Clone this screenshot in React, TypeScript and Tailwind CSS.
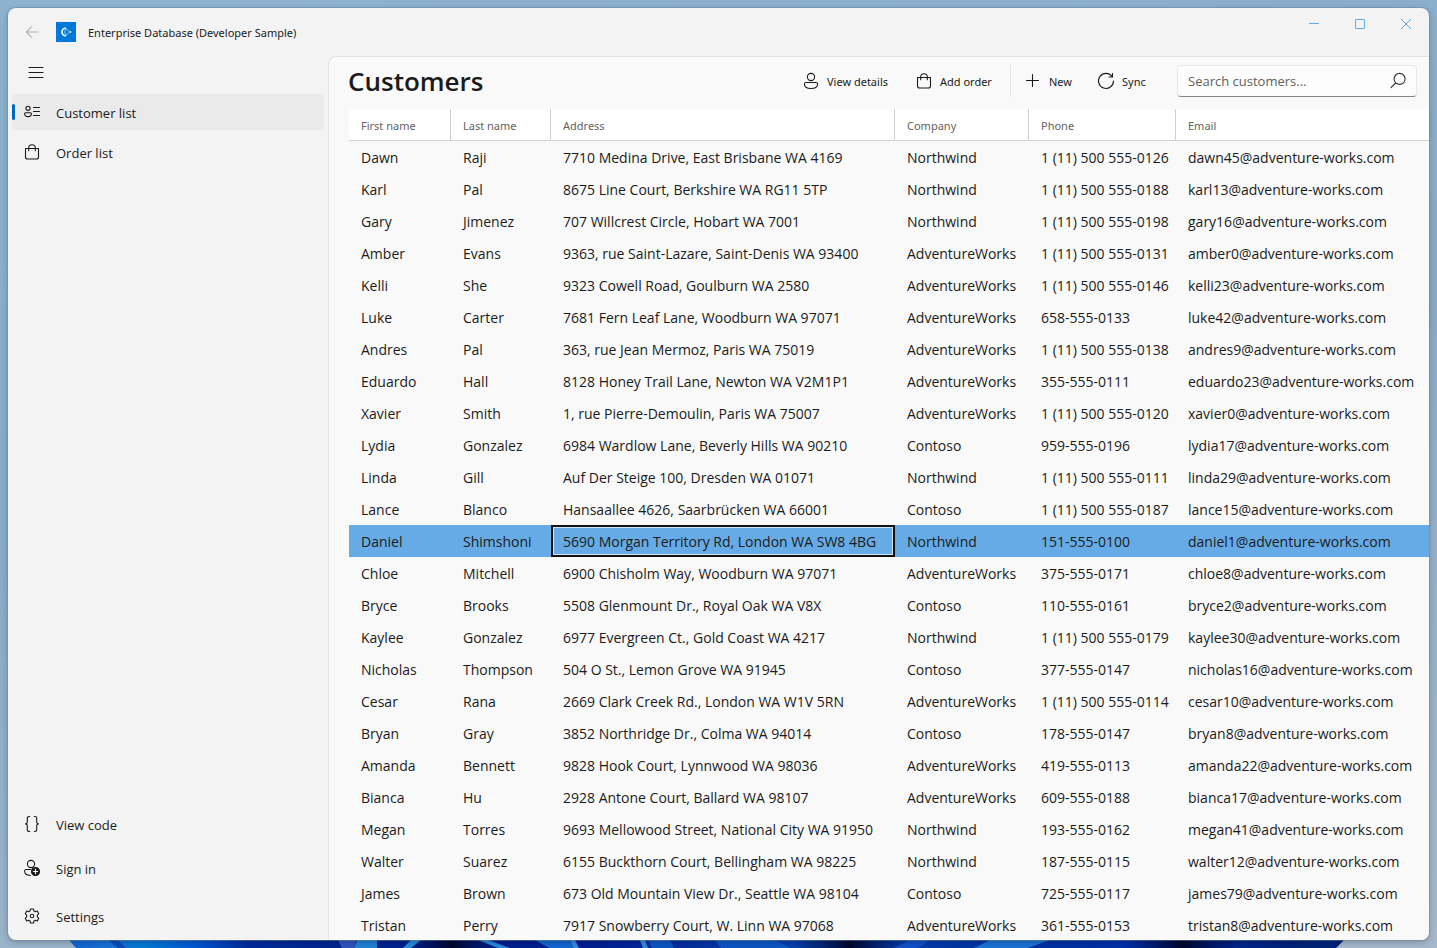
import { useState } from "react";
import type { ReactNode } from "react";

type Customer = [string, string, string, string, string, string];

const N = "Northwind";
const A = "AdventureWorks";
const C = "Contoso";

const customers: Customer[] = [
  ["Dawn", "Raji", "7710 Medina Drive, East Brisbane WA 4169", N, "1 (11) 500 555-0126", "dawn45@adventure-works.com"],
  ["Karl", "Pal", "8675 Line Court, Berkshire WA RG11 5TP", N, "1 (11) 500 555-0188", "karl13@adventure-works.com"],
  ["Gary", "Jimenez", "707 Willcrest Circle, Hobart WA 7001", N, "1 (11) 500 555-0198", "gary16@adventure-works.com"],
  ["Amber", "Evans", "9363, rue Saint-Lazare, Saint-Denis WA 93400", A, "1 (11) 500 555-0131", "amber0@adventure-works.com"],
  ["Kelli", "She", "9323 Cowell Road, Goulburn WA 2580", A, "1 (11) 500 555-0146", "kelli23@adventure-works.com"],
  ["Luke", "Carter", "7681 Fern Leaf Lane, Woodburn WA 97071", A, "658-555-0133", "luke42@adventure-works.com"],
  ["Andres", "Pal", "363, rue Jean Mermoz, Paris WA 75019", A, "1 (11) 500 555-0138", "andres9@adventure-works.com"],
  ["Eduardo", "Hall", "8128 Honey Trail Lane, Newton WA V2M1P1", A, "355-555-0111", "eduardo23@adventure-works.com"],
  ["Xavier", "Smith", "1, rue Pierre-Demoulin, Paris WA 75007", A, "1 (11) 500 555-0120", "xavier0@adventure-works.com"],
  ["Lydia", "Gonzalez", "6984 Wardlow Lane, Beverly Hills WA 90210", C, "959-555-0196", "lydia17@adventure-works.com"],
  ["Linda", "Gill", "Auf Der Steige 100, Dresden WA 01071", N, "1 (11) 500 555-0111", "linda29@adventure-works.com"],
  ["Lance", "Blanco", "Hansaallee 4626, Saarbrücken WA 66001", C, "1 (11) 500 555-0187", "lance15@adventure-works.com"],
  ["Daniel", "Shimshoni", "5690 Morgan Territory Rd, London WA SW8 4BG", N, "151-555-0100", "daniel1@adventure-works.com"],
  ["Chloe", "Mitchell", "6900 Chisholm Way, Woodburn WA 97071", A, "375-555-0171", "chloe8@adventure-works.com"],
  ["Bryce", "Brooks", "5508 Glenmount Dr., Royal Oak WA V8X", C, "110-555-0161", "bryce2@adventure-works.com"],
  ["Kaylee", "Gonzalez", "6977 Evergreen Ct., Gold Coast WA 4217", N, "1 (11) 500 555-0179", "kaylee30@adventure-works.com"],
  ["Nicholas", "Thompson", "504 O St., Lemon Grove WA 91945", C, "377-555-0147", "nicholas16@adventure-works.com"],
  ["Cesar", "Rana", "2669 Clark Creek Rd., London WA W1V 5RN", A, "1 (11) 500 555-0114", "cesar10@adventure-works.com"],
  ["Bryan", "Gray", "3852 Northridge Dr., Colma WA 94014", C, "178-555-0147", "bryan8@adventure-works.com"],
  ["Amanda", "Bennett", "9828 Hook Court, Lynnwood WA 98036", A, "419-555-0113", "amanda22@adventure-works.com"],
  ["Bianca", "Hu", "2928 Antone Court, Ballard WA 98107", A, "609-555-0188", "bianca17@adventure-works.com"],
  ["Megan", "Torres", "9693 Mellowood Street, National City WA 91950", N, "193-555-0162", "megan41@adventure-works.com"],
  ["Walter", "Suarez", "6155 Buckthorn Court, Bellingham WA 98225", N, "187-555-0115", "walter12@adventure-works.com"],
  ["James", "Brown", "673 Old Mountain View Dr., Seattle WA 98104", C, "725-555-0117", "james79@adventure-works.com"],
  ["Tristan", "Perry", "7917 Snowberry Court, W. Linn WA 97068", A, "361-555-0153", "tristan8@adventure-works.com"],
];

const columns = ["First name", "Last name", "Address", "Company", "Phone", "Email"];

function Icon({ children }: { children: ReactNode }) {
  return (
    <svg
      viewBox="0 0 20 20"
      className="size-5 shrink-0"
      fill="none"
      stroke="currentColor"
      strokeWidth="1.1"
      strokeLinecap="round"
      strokeLinejoin="round"
      aria-hidden="true"
    >
      {children}
    </svg>
  );
}

const PersonIcon = () => (
  <Icon>
    <circle cx="10" cy="6" r="3.6" />
    <path d="M4.9 11.5h10.2a1.500 1.500 0 0 1 1.500 1.500c0 2.900-2.700 4.500-6.600 4.500S3.400 15.900 3.400 13a1.500 1.500 0 0 1 1.500-1.500Z" />
  </Icon>
);

const BagIcon = () => (
  <Icon>
    <path d="M3.5 6.500h13v8.500a2 2 0 0 1-2 2h-9a2 2 0 0 1-2-2Z" />
    <path d="M6.700 8.700V6a3.300 3.300 0 0 1 6.600 0v2.700" />
  </Icon>
);

const PlusIcon = () => (
  <Icon>
    <path d="M9.500 3.500v12M3.500 9.500h12" />
  </Icon>
);

const SyncIcon = () => (
  <Icon>
    <path d="M16.200 5.700A7.500 7.500 0 1 0 17.500 10" />
    <path d="M16.500 2.500v3.500H13" />
  </Icon>
);

const SearchIcon = () => (
  <Icon>
    <circle cx="11.600" cy="7.900" r="5.500" />
    <path d="M7.600 12 3 16.600" />
  </Icon>
);

const ContactListIcon = () => (
  <Icon>
    <circle cx="6" cy="6.300" r="2.100" />
    <path d="M3.600 10.700h4.800a1 1 0 0 1 1 1c0 1.900-1.300 2.900-3.400 2.900s-3.400-1-3.400-2.900a1 1 0 0 1 1-1Z" />
    <path d="M11.500 5.500h6M11.500 9.500h6M11.500 13.500h6" />
  </Icon>
);

const BracesIcon = () => (
  <Icon>
    <path d="M7.600 2.500H7A1.700 1.700 0 0 0 5.300 4.200v3.600A1.900 1.900 0 0 1 3.600 9.900a1.900 1.900 0 0 1 1.700 2.100v3.800A1.700 1.700 0 0 0 7 17.500h.6" />
    <path d="M12.400 2.500h.6a1.700 1.700 0 0 1 1.700 1.700v3.600a1.900 1.900 0 0 0 1.700 2.100 1.900 1.900 0 0 0-1.700 2.100v3.800a1.700 1.700 0 0 1-1.700 1.700h-.6" />
  </Icon>
);

const SignInIcon = () => (
  <Icon>
    <circle cx="9" cy="6" r="3.600" />
    <path d="M8.500 11.500H4.200a1.600 1.600 0 0 0-1.600 1.600c0 2.700 2 4.300 5.900 4.400" />
    <circle cx="13.500" cy="13.500" r="4" fill="currentColor" />
    <path d="M13.500 11.400v4.200M11.400 13.500h4.200" stroke="#f3f3f3" strokeWidth="1.200" />
  </Icon>
);

const GearIcon = () => (
  <Icon>
    <circle cx="10" cy="10" r="1.800" />
    <path d="M8.500 3h3l.45 1.900 1.400.8 1.900-.6 1.500 2.600-1.400 1.400v1.800l1.400 1.400-1.500 2.600-1.900-.6-1.400.8-.45 1.900h-3l-.45-1.900-1.400-.8-1.900.6-1.500-2.600 1.400-1.400V9.100L3.250 7.700l1.500-2.600 1.900.6 1.400-.8Z" />
  </Icon>
);

function NavItem({ icon, label, active, onClick }: { icon: ReactNode; label: string; active?: boolean; onClick?: () => void }) {
  return (
    <button
      type="button"
      onClick={onClick}
      aria-current={active ? "page" : undefined}
      className={`flex h-9 w-full shrink-0 items-center rounded text-left ${active ? "bg-[#eaeaea]" : "hover:bg-[#eaeaea]"}`}
    >
      <span className={`h-4 w-[3px] rounded-full ${active ? "bg-[#0067c0]" : ""}`} />
      <span className="ml-[7px] flex">{icon}</span>
      <span className="ml-3.5 pt-0.5 text-[13px] leading-5">{label}</span>
    </button>
  );
}

function Command({ icon, label, width }: { icon: ReactNode; label: string; width: string }) {
  return (
    <button type="button" className={`flex h-8 shrink-0 items-center gap-1.5 rounded pl-3 whitespace-nowrap hover:bg-[#efefef] ${width}`}>
      {icon}
      <span className="pt-0.5 font-['Noto_Sans',sans-serif] text-[11px] leading-4">{label}</span>
    </button>
  );
}

function CaptionButton({ label, children }: { label: string; children: ReactNode }) {
  return (
    <button type="button" aria-label={label} className="flex h-8 w-[46px] items-center justify-center text-[#5fa9e4] hover:bg-[#e6e6e6]">
      <svg viewBox="0 0 12 12" className="size-3" fill="none" stroke="currentColor" aria-hidden="true">
        {children}
      </svg>
    </button>
  );
}

function Wallpaper() {
  return (
    <svg className="absolute bottom-0 left-0 h-2 w-full" viewBox="0 0 1437 8" preserveAspectRatio="none" aria-hidden="true">
      <defs>
        <linearGradient id="bloom">
          <stop offset="0" stopColor="#1263d2" />
          <stop offset="0.030" stopColor="#1870d4" />
          <stop offset="0.060" stopColor="#0078d6" />
          <stop offset="0.100" stopColor="#0056d4" />
          <stop offset="0.140" stopColor="#002b9d" />
          <stop offset="0.210" stopColor="#00248c" />
          <stop offset="0.400" stopColor="#001d90" />
          <stop offset="0.600" stopColor="#0b46b4" />
          <stop offset="0.740" stopColor="#0030a0" />
          <stop offset="0.840" stopColor="#0030ac" />
          <stop offset="1" stopColor="#001a68" />
        </linearGradient>
        <linearGradient id="dark">
          <stop offset="0" stopColor="#000c50" stopOpacity="0" />
          <stop offset="0.500" stopColor="#00072c" />
          <stop offset="1" stopColor="#000c50" stopOpacity="0" />
        </linearGradient>
      </defs>
      <path d="M69 0H1344L1336 8H76Z" fill="url(#bloom)" />
      <path d="M108 0h10l8 8h-8Z" fill="#0b4bb8" />
      <path d="M338 0h18l-2 8h-12Z" fill="#3154bd" />
      <path d="M357 0h20v8h-23Z" fill="#2080d4" />
      <path d="M412 0h68l20 8h-96Z" fill="url(#dark)" />
      <path d="M411 0h10l-10 8h-8ZM478 0h10l22 8h-12Z" fill="#268ad8" />
      <path d="M535 0h34l8 8h-28Z" fill="#1366cf" />
      <path d="M570 0h5l4 8h-5ZM640 0h5l3 8h-5Z" fill="#358bd9" />
      <path d="M648 0h22l4 8h-22ZM715 0h60l16 8h-70Z" fill="#0c56c4" />
      <path d="M790 0h120l-16 8h-92Z" fill="url(#dark)" />
      <path d="M910 0h20l-12 8h-24Z" fill="#1250c8" />
      <path d="M990 0h60l-22 8h-54Z" fill="#1b72d4" />
      <path d="M1135 0h110l-14 8h-110Z" fill="url(#dark)" />
      <path d="M1306 0h36l-8 8h-40Z" fill="#00247c" />
    </svg>
  );
}

export default function App() {
  const [page, setPage] = useState("customers");
  const [selected, setSelected] = useState(12);

  return (
    <div className="relative h-screen overflow-hidden bg-[linear-gradient(170deg,#8db2cf_0%,#87abc9_45%,#a5b8cb_100%)] p-2 font-['Open_Sans',sans-serif] text-[#1b1b1b]">
      <Wallpaper />
      <div className="relative flex h-full flex-col overflow-hidden rounded-lg bg-[#f3f3f3] shadow-[0_0_0_1px_#6e8ca580,0_2px_6px_#00000040]">
        <header className="flex h-12 shrink-0 items-start">
          <div className="flex h-12 flex-1 items-center pl-3.5">
            <button type="button" aria-label="Back" disabled className="flex w-5 justify-center text-[#b4b4b4]">
              <Icon>
                <path d="M16 10H4.500M9.500 4.900 4.400 10l5.100 5.100" />
              </Icon>
            </button>
            <svg viewBox="0 0 20 20" className="ml-3.5 size-5" fill="none" aria-hidden="true">
              <path fill="#0078d7" d="M0 0h20v20H0z" />
              <path d="M9.800 6A4 4 0 0 0 6 10a4 4 0 0 0 3.800 4" stroke="#fff" strokeWidth="1.700" />
              <path d="m10 6.500 3.500 3.500-3.500 3.500L8.600 10Z" stroke="#c8e2f8" strokeWidth="0.800" />
              <circle cx="14.500" cy="10" r="0.900" fill="#d6eafa" />
            </svg>
            <span className="ml-3 pt-0.5 font-['Noto_Sans',sans-serif] text-[11px] leading-4">Enterprise Database (Developer Sample)</span>
          </div>
          <div className="flex">
            <CaptionButton label="Minimize">
              <path d="M1 5.500h10" />
            </CaptionButton>
            <CaptionButton label="Maximize">
              <rect x="1.500" y="1.500" width="9" height="9" rx="0.500" />
            </CaptionButton>
            <CaptionButton label="Close">
              <path d="m1 1 10 10M11 1 1 11" />
            </CaptionButton>
          </div>
        </header>

        <div className="flex min-h-0 flex-1">
          <nav className="flex w-80 shrink-0 flex-col px-1">
            <button type="button" aria-label="Toggle navigation" className="mb-1.5 ml-1 flex h-8 w-10 shrink-0 items-center justify-center rounded hover:bg-[#eaeaea]">
              <Icon>
                <path d="M3 5.500h14M3 10.500h14M3 15.500h14" strokeWidth="1" />
              </Icon>
            </button>
            <div className="flex flex-col gap-1">
              <NavItem icon={<ContactListIcon />} label="Customer list" active={page === "customers"} onClick={() => setPage("customers")} />
              <NavItem icon={<BagIcon />} label="Order list" active={page === "orders"} onClick={() => setPage("orders")} />
            </div>
            <div className="mt-auto flex flex-col gap-2 pb-1.5">
              <NavItem icon={<BracesIcon />} label="View code" />
              <NavItem icon={<SignInIcon />} label="Sign in" />
              <div className="pt-1">
                <NavItem icon={<GearIcon />} label="Settings" />
              </div>
            </div>
          </nav>

          <main className="flex min-w-0 flex-1 flex-col overflow-hidden rounded-tl-lg border-t border-l border-[#e5e5e5] bg-[#f9f9f9]">
            <div className="flex shrink-0 items-center pt-2 pr-3 pb-3 pl-[19px]">
              <h1 className="mr-auto text-[26px] leading-8 font-semibold">Customers</h1>
              <Command icon={<PersonIcon />} label="View details" width="w-[113px]" />
              <Command icon={<BagIcon />} label="Add order" width="w-[108px]" />
              <span className="h-8 w-px shrink-0 bg-[#e5e5e5]" />
              <Command icon={<PlusIcon />} label="New" width="w-[73px]" />
              <Command icon={<SyncIcon />} label="Sync" width="w-[75px]" />
              <div className="ml-[18px] flex h-8 w-60 shrink-0 items-center rounded border border-[#e8e8e8] border-b-[#868686] bg-[#fdfdfd] pr-2 pl-2.5">
                <input
                  type="text"
                  aria-label="Search customers"
                  placeholder="Search customers..."
                  className="min-w-0 flex-1 bg-transparent text-[13px] leading-5 outline-none placeholder:text-[#606060]"
                />
                <button type="button" aria-label="Search" className="text-[#303030]">
                  <SearchIcon />
                </button>
              </div>
            </div>

            <div className="min-h-0 flex-1 overflow-hidden pl-5">
              <table className="w-full table-fixed border-separate border-spacing-0">
                <colgroup>
                  <col className="w-[102px]" />
                  <col className="w-[100px]" />
                  <col className="w-[344px]" />
                  <col className="w-[134px]" />
                  <col className="w-[147px]" />
                  <col />
                </colgroup>
                <thead>
                  <tr>
                    {columns.map((name) => (
                      <th
                        key={name}
                        scope="col"
                        className="h-8 border-r border-b border-[#d0d0d0] bg-white px-3 pt-0.5 pb-0 text-left font-['Noto_Sans',sans-serif] text-[11px] leading-4 font-normal text-[#626262] last:border-r-0"
                      >
                        {name}
                      </th>
                    ))}
                  </tr>
                </thead>
                <tbody>
                  {customers.map((row, r) => (
                    <tr key={row[5]} onClick={() => setSelected(r)} className={r === selected ? "bg-[#66abe5]" : ""}>
                      {row.map((value, c) => (
                        <td
                          key={c}
                          className={`h-8 px-3 pt-0.5 pb-0 text-[14px] leading-5 whitespace-nowrap ${
                            r === selected && c === 2 ? "shadow-[inset_0_0_0_2px_#111111,inset_0_0_0_3px_#cfe4f7]" : ""
                          }`}
                        >
                          {value}
                        </td>
                      ))}
                    </tr>
                  ))}
                </tbody>
              </table>
            </div>
          </main>
        </div>
      </div>
    </div>
  );
}
